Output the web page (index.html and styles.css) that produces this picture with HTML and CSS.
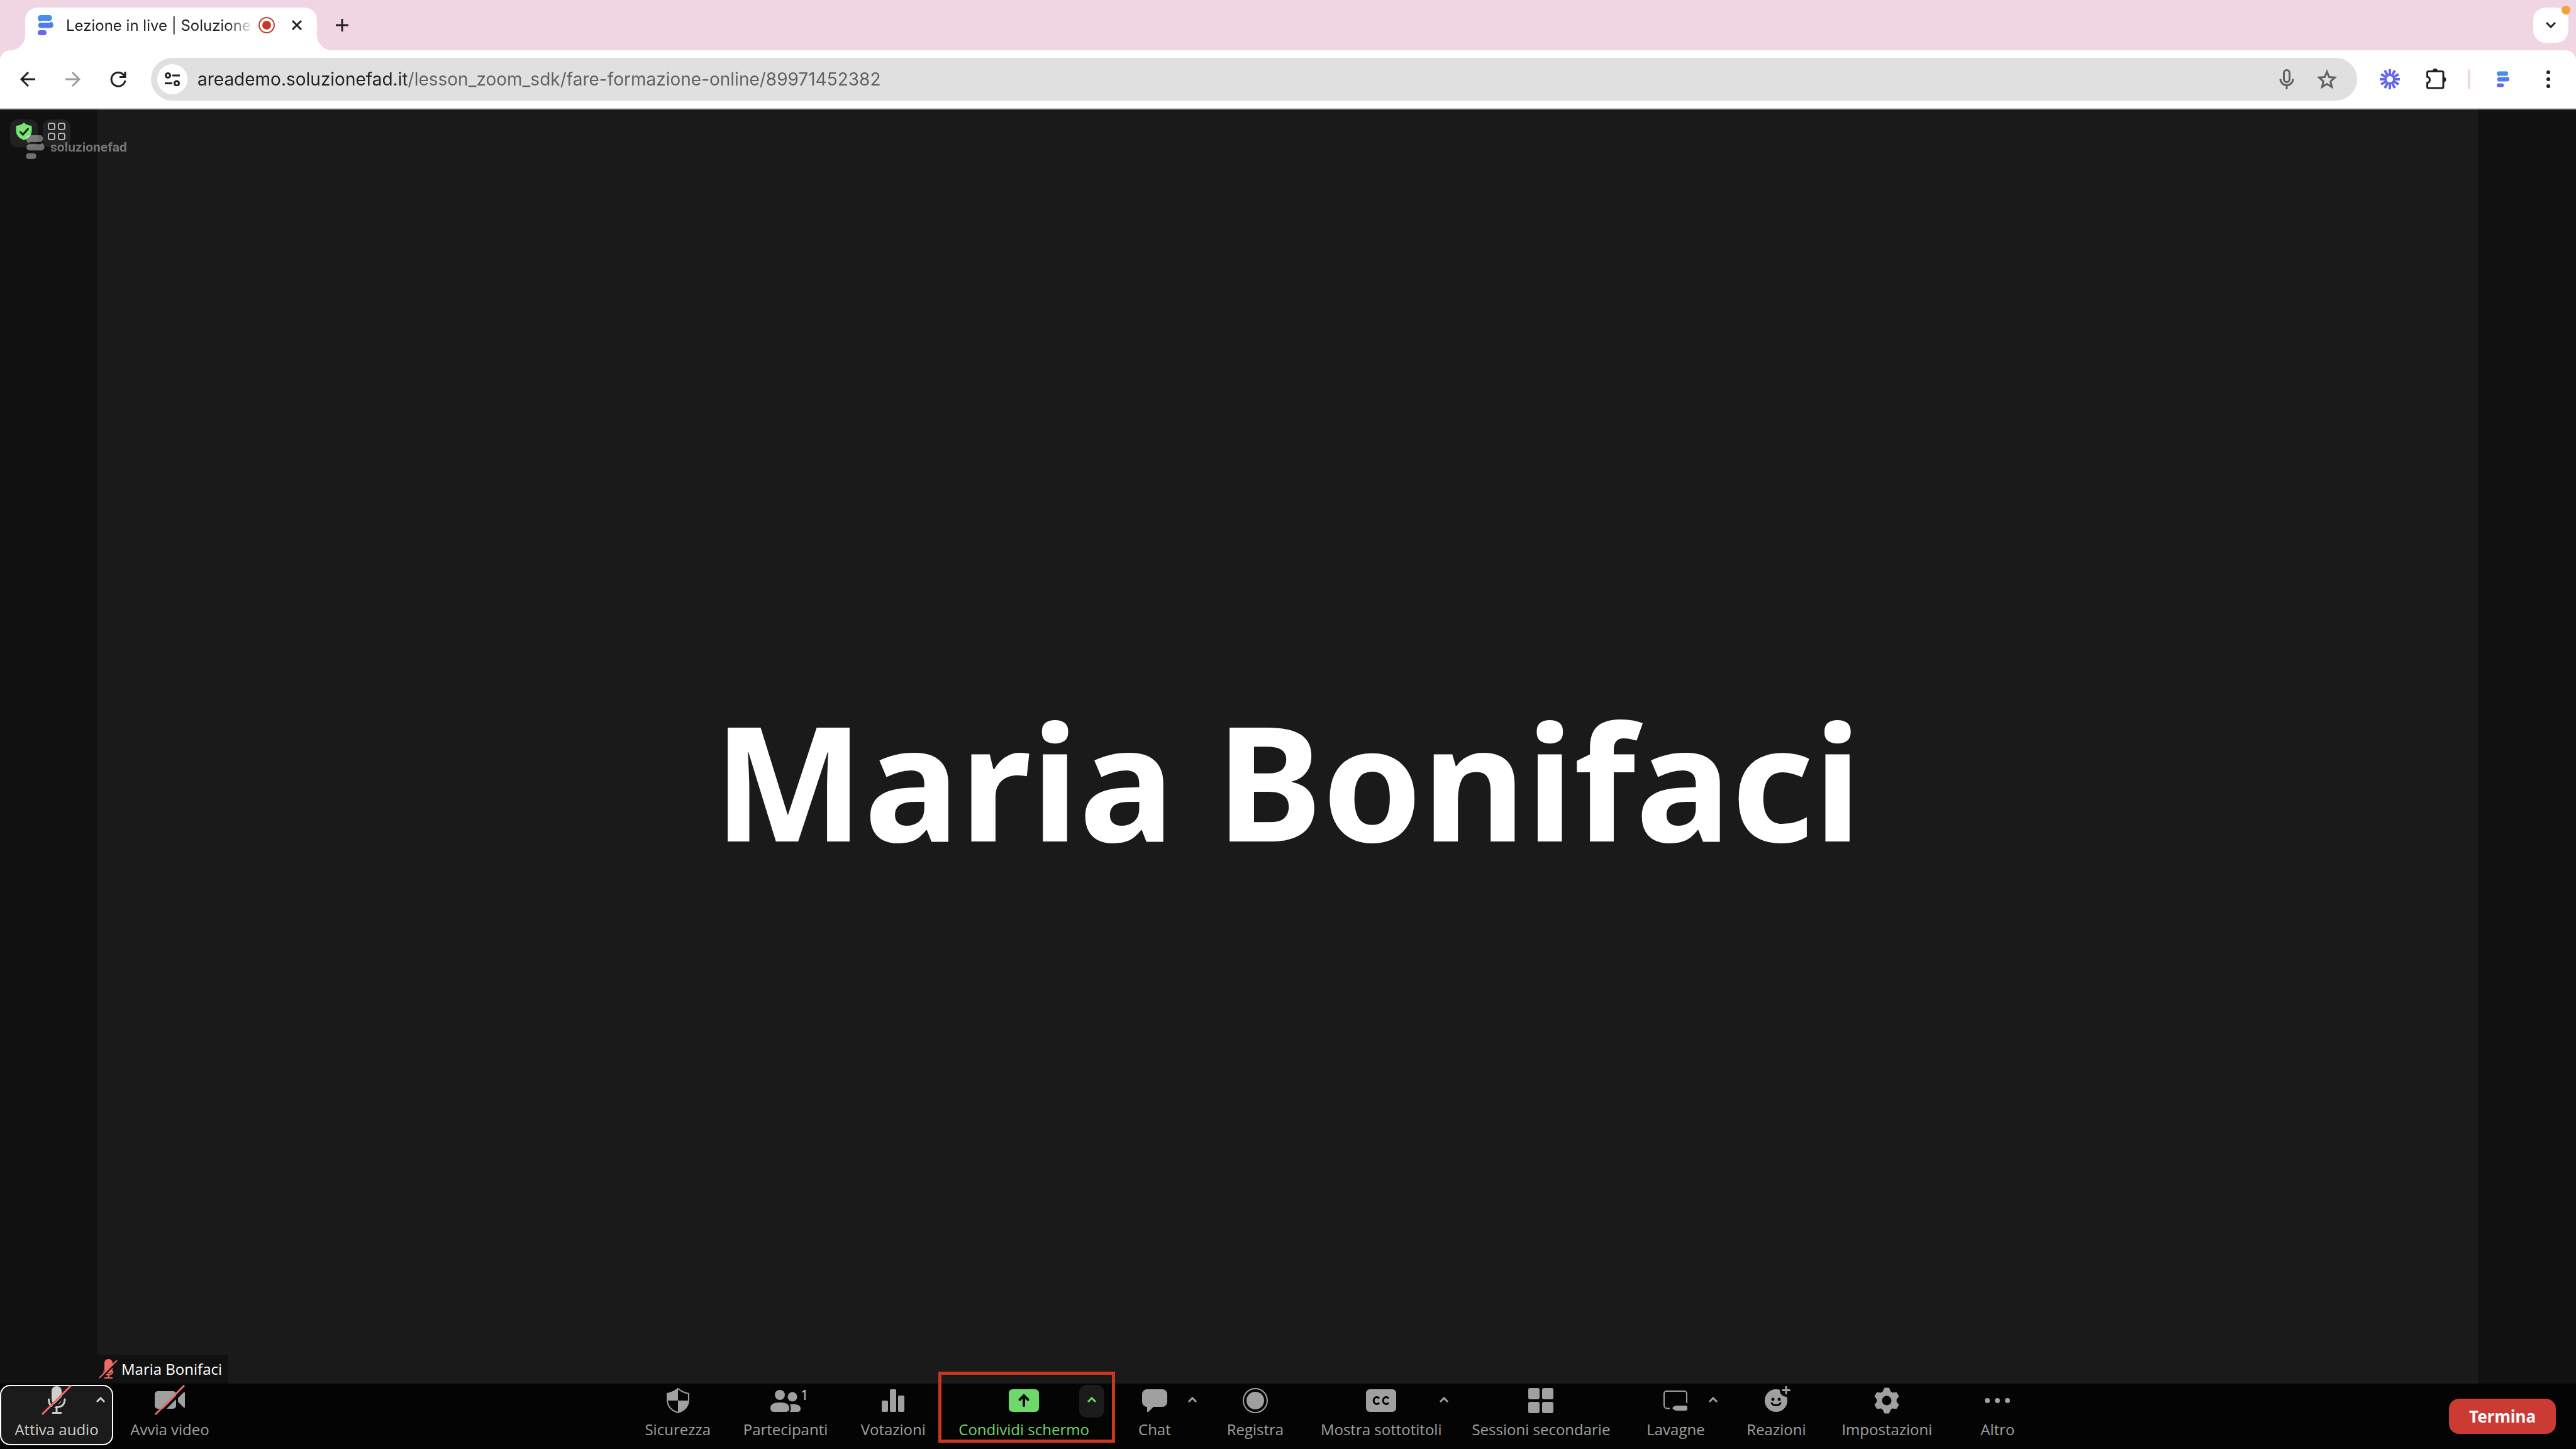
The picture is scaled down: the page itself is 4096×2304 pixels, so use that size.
FILE: index.html
```
<!DOCTYPE html>
<html lang="it">
<head>
    <meta charset="UTF-8">
    <meta name="viewport" content="width=device-width, initial-scale=1.0">
    <title>Lezione in live | Soluzionefad</title>
    <link rel="stylesheet" href="styles.css">
</head>
<body>

    <svg class="defs" width="0" height="0" aria-hidden="true">
        <linearGradient id="brand" x1="0" y1="0" x2="0" y2="32" gradientUnits="userSpaceOnUse">
            <stop offset="0" stop-color="#4396ea"/>
            <stop offset="0.5" stop-color="#4f7cee"/>
            <stop offset="1" stop-color="#6f62ee"/>
        </linearGradient>
        <symbol id="logo" viewBox="0 0 25 32">
            <path d="M5 0H20a5 5 0 0 1 0 9H6q-2 0-2 2Q0 8 0 4.500A5 4.500 0 0 1 5 0Z"/>
            <path d="M5 12H19q2 0 2-2 4 2 4 6a5 4.500 0 0 1-5 4.500H5a4 4 0 0 1 0-8.500Z"/>
            <rect y="24" width="14" height="8" rx="4"/>
        </symbol>
        <symbol id="caret" viewBox="0 0 16 10">
            <path d="M2 8 8 2l6 6" fill="none" stroke="currentColor" stroke-width="3"/>
        </symbol>
    </svg>

    <header class="tab-strip">
        <div class="tab">
            <svg class="favicon" width="25" height="32" fill="url(#brand)"><use href="#logo"/></svg>
            <span class="tab-title">Lezione in live | Soluzione</span>
            <svg width="28" height="28" viewBox="0 0 28 28" fill="#c5392b"><circle cx="14" cy="14" r="12" fill="none" stroke="#c5392b" stroke-width="2"/><circle cx="14" cy="14" r="7"/></svg>
            <button class="icon-button tab-close" aria-label="Chiudi scheda">
                <svg width="18" height="18" viewBox="0 0 18 18" fill="none" stroke="#202124" stroke-width="3"><path d="M2 2l14 14M16 2 2 16"/></svg>
            </button>
        </div>
        <button class="icon-button new-tab" aria-label="Nuova scheda">
            <svg width="20" height="20" viewBox="0 0 20 20" fill="none" stroke="#202124" stroke-width="3"><path d="M10 0v20M0 10h20"/></svg>
        </button>
        <button class="icon-button tab-search" aria-label="Cerca schede">
            <svg width="18" height="12" viewBox="0 0 18 12" fill="none" stroke="#202124" stroke-width="3"><path d="M2 2l7 7 7-7"/></svg>
            <span class="alert-dot"></span>
        </button>
    </header>

    <nav class="toolbar">
        <button class="icon-button" aria-label="Indietro">
            <svg width="24" height="24" viewBox="0 0 24 24" fill="none" stroke="#202124" stroke-width="3"><path d="M24 12H3M13 1 2 12l11 11"/></svg>
        </button>
        <button class="icon-button" aria-label="Avanti">
            <svg width="24" height="24" viewBox="0 0 24 24" fill="none" stroke="#9b9b9b" stroke-width="3"><path d="M0 12h21M11 1l11 11-11 11"/></svg>
        </button>
        <button class="icon-button" aria-label="Ricarica">
            <svg width="26" height="26" viewBox="0 0 26 26" fill="none" stroke="#202124" stroke-width="3"><path d="M24 15A11 11 0 1 1 21 5.500L24 9M24 1v8.500H15"/></svg>
        </button>
        <div class="address-bar">
            <button class="icon-button site-info" aria-label="Informazioni sul sito">
                <svg width="24" height="22" viewBox="0 0 24 22" fill="none" stroke="#202124" stroke-width="3"><circle cx="5" cy="5" r="3.500"/><path d="M12 5h12M0 17.500h12"/><circle cx="19" cy="17.500" r="3.500"/></svg>
            </button>
            <input class="url" type="text" aria-label="Indirizzo" value="areademo.soluzionefad.it/lesson_zoom_sdk/fare-formazione-online/89971452382">
            <button class="icon-button" aria-label="Microfono">
                <svg width="24" height="32" viewBox="0 0 24 32" fill="none" stroke="#5f6064" stroke-width="3"><rect x="7.500" y="1.500" width="9" height="19" rx="4.500"/><path d="M2 15.500a10 10 0 0 0 20 0M12 25.500V32"/></svg>
            </button>
            <button class="icon-button" aria-label="Preferiti">
                <svg width="32" height="32" viewBox="0 0 32 32" fill="none" stroke="#5f6064" stroke-width="3"><path d="M16 4l3.500 8.500 9 .8-6.800 6 2 9-7.700-4.800-7.700 4.800 2-9-6.800-6 9-.8z"/></svg>
            </button>
        </div>
        <button class="icon-button" aria-label="Estensione">
            <svg width="32" height="32" viewBox="-16 -16 32 32" fill="none" stroke="#6366f1" stroke-width="4"><path d="M0-16V-5M0 16V5M-16 0H-5M16 0H5M8-13.900 2.500-4.300M-8 13.900l5.500-9.600M-8-13.900l5.500 9.600M8 13.900 2.500 4.300M13.900-8 4.300-2.500M-13.900 8l9.600-5.500M-13.900-8l9.600 5.500M13.900 8 4.300 2.500"/></svg>
        </button>
        <button class="icon-button" aria-label="Estensioni">
            <svg width="36" height="36" viewBox="0 0 36 36"><path d="M5.500 7.500a2 2 0 0 1 2-2H29a2 2 0 0 1 2 2V30a2 2 0 0 1-2 2H7.500a2 2 0 0 1-2-2v-6q4-1 4-5t-4-5z" fill="none" stroke="#202124" stroke-width="3"/><path d="M14 5a4 4 0 0 1 8 0zM31 14a4.500 4.500 0 0 1 0 9z" fill="#202124"/></svg>
        </button>
        <span class="divider"></span>
        <button class="icon-button" aria-label="Profilo">
            <svg width="20" height="26" viewBox="0 0 25 32" fill="url(#brand)"><use href="#logo"/></svg>
        </button>
        <button class="icon-button" aria-label="Menu">
            <svg width="6" height="28" viewBox="0 0 6 28" fill="#202124"><circle cx="3" cy="3" r="3"/><circle cx="3" cy="14" r="3"/><circle cx="3" cy="25" r="3"/></svg>
        </button>
    </nav>

    <main class="meeting">
        <div class="video">
            <h1>Maria Bonifaci</h1>
            <div class="name-tag">
                <svg width="30" height="32" viewBox="0 0 30 32"><rect x="9" y="0" width="13" height="23" rx="6" fill="#ef6b64"/><path d="M8 19q1 6 7.500 6t7-6M15.500 25v4M9 30h13" fill="none" stroke="#ef6b64" stroke-width="2"/><path d="M3 31 30 4" stroke="#111" stroke-width="3"/><path d="M1 30 29 2" stroke="#ef6b64" stroke-width="2"/></svg>
                <span>Maria Bonifaci</span>
            </div>
        </div>

        <div class="corner-buttons">
            <button class="icon-button" aria-label="Informazioni riunione">
                <svg width="26" height="28" viewBox="0 0 26 28"><path d="M13 0q5 4.500 12.500 5v8q0 10-12.500 15Q.5 23 .5 13V5Q8 4.500 13 0Z" fill="#75e670"/><path d="M7.500 15l4 4 8-9" fill="none" stroke="#1b1b1b" stroke-width="3" stroke-linecap="round"/></svg>
            </button>
            <button class="icon-button" aria-label="Vista">
                <svg width="28" height="28" viewBox="0 0 28 28" fill="none" stroke="#b5b5b5" stroke-width="2"><rect x="1" y="1" width="10" height="10" rx="3"/><rect x="17" y="1" width="10" height="10" rx="3"/><rect x="1" y="17" width="10" height="10" rx="3"/><rect x="17" y="17" width="10" height="10" rx="3"/></svg>
            </button>
        </div>
        <div class="watermark">
            <svg width="30" height="38" viewBox="0 0 25 32" fill="#fff"><use href="#logo"/></svg>
            <span>soluzionefad</span>
        </div>

        <footer class="controls">
            <div class="group">
                <div class="control active">
                    <button class="action">
                        <svg width="48" height="48" viewBox="0 0 48 48"><rect x="16" y="1" width="16" height="29" rx="8" fill="#cfcfcf"/><path d="M11.500 22q0 12.500 12.500 12.500T37 22M24 35v8M18 43.500h13" fill="none" stroke="#cfcfcf" stroke-width="3" stroke-linecap="round"/><path d="M4 49 50 3" stroke="#1b1b1b" stroke-width="4"/><path d="M1 46 47 0" stroke="#ef6b64" stroke-width="3"/></svg>
                        <span>Attiva audio</span>
                    </button>
                    <button class="caret" aria-label="Opzioni audio"><svg width="16" height="10"><use href="#caret"/></svg></button>
                </div>
                <div class="control">
                    <button class="action">
                        <svg width="48" height="48" viewBox="0 0 48 48"><rect x="0" y="9" width="34" height="28" rx="5"/><path d="M37 20 46 11q2-1 2 1v22q0 2-2 1l-9-9z"/><path d="M4 49 50 3" stroke="#040404" stroke-width="4"/><path d="M1 46 47 0" stroke="#ef6b64" stroke-width="3"/></svg>
                        <span>Avvia video</span>
                    </button>
                </div>
            </div>

            <div class="group center">
                <div class="control">
                    <button class="action">
                        <svg width="48" height="48" viewBox="0 0 48 48"><path d="M24 5q7 6 17 8v9q0 16-17 21Q7 38 7 22v-9Q17 11 24 5Z" fill="none" stroke="currentColor" stroke-width="2"/><path d="M24 5v19H7V13Q17 11 24 5ZM24 24h17q-1 14-17 19z"/></svg>
                        <span>Sicurezza</span>
                    </button>
                </div>
                <div class="control">
                    <button class="action">
                        <svg width="48" height="48" viewBox="0 0 48 48"><circle cx="15" cy="15" r="8"/><circle cx="35" cy="18" r="7.500"/><path d="M6 42q-6 0-6-6 0-9 15-9t15 9q0 6-6 6zM31 42q3-6 0-12 17-2 17 7 0 5-5 5z"/></svg>
                        <span>Partecipanti</span>
                    </button>
                    <span class="count">1</span>
                </div>
                <div class="control">
                    <button class="action">
                        <svg width="48" height="48" viewBox="0 0 48 48"><rect x="6" y="24" width="10" height="18" rx="2"/><rect x="19" y="6" width="10" height="36" rx="2"/><rect x="32" y="16" width="10" height="26" rx="2"/></svg>
                        <span>Votazioni</span>
                    </button>
                </div>
                <div class="control share">
                    <button class="action">
                        <svg width="48" height="48" viewBox="0 0 48 48"><rect y="6" width="48" height="36" rx="6"/><path d="M24 32V17M17.500 22.500 24 16l6.500 6.500" fill="none" stroke="#040404" stroke-width="4" stroke-linecap="round"/></svg>
                        <span>Condividi schermo</span>
                    </button>
                    <button class="caret" aria-label="Opzioni condivisione"><svg width="16" height="10"><use href="#caret"/></svg></button>
                    <div class="highlight"></div>
                </div>
                <div class="control">
                    <button class="action">
                        <svg width="48" height="48" viewBox="0 0 48 48"><path d="M12 6h24a8 8 0 0 1 8 8v12a8 8 0 0 1-8 8H22l-8 8h-2v-8a8 8 0 0 1-8-8V14a8 8 0 0 1 8-8z"/></svg>
                        <span>Chat</span>
                    </button>
                    <button class="caret" aria-label="Opzioni chat"><svg width="16" height="10"><use href="#caret"/></svg></button>
                </div>
                <div class="control">
                    <button class="action">
                        <svg width="48" height="48" viewBox="0 0 48 48"><circle cx="24" cy="24" r="19" fill="none" stroke="currentColor" stroke-width="2"/><circle cx="24" cy="24" r="14"/></svg>
                        <span>Registra</span>
                    </button>
                </div>
                <div class="control">
                    <button class="action">
                        <svg width="48" height="48" viewBox="0 0 48 48"><rect y="6" width="48" height="36" rx="6"/><path d="M21 20.500a5 5.500 0 1 0 0 7M36 20.500a5 5.500 0 1 0 0 7" fill="none" stroke="#040404" stroke-width="3"/></svg>
                        <span>Mostra sottotitoli</span>
                    </button>
                    <button class="caret" aria-label="Opzioni sottotitoli"><svg width="16" height="10"><use href="#caret"/></svg></button>
                </div>
                <div class="control">
                    <button class="action">
                        <svg width="48" height="48" viewBox="0 0 48 48"><rect x="4" y="4" width="18" height="18" rx="3"/><rect x="26" y="4" width="18" height="18" rx="3"/><rect x="4" y="26" width="18" height="18" rx="3"/><rect x="26" y="26" width="18" height="18" rx="3"/></svg>
                        <span>Sessioni secondarie</span>
                    </button>
                </div>
                <div class="control">
                    <button class="action">
                        <svg width="48" height="48" viewBox="0 0 48 48"><path d="M15 36.500h-4a5 5 0 0 1-5-5V13a4 4 0 0 1 4-4h28a4 4 0 0 1 4 4v15" fill="none" stroke="currentColor" stroke-width="2"/><path d="M19 36q3-4 7-4h14q3 0 3 3v2q0 3-3 3H26q-4 0-7-4z"/></svg>
                        <span>Lavagne</span>
                    </button>
                    <button class="caret" aria-label="Opzioni lavagne"><svg width="16" height="10"><use href="#caret"/></svg></button>
                </div>
                <div class="control">
                    <button class="action">
                        <svg width="48" height="48" viewBox="0 0 48 48"><circle cx="24" cy="24" r="18"/><circle cx="40" cy="8" r="10" fill="#040404"/><path d="M40 1v13M33.500 7.500h13" fill="none" stroke="currentColor" stroke-width="3"/><g fill="#040404"><circle cx="19" cy="22" r="2.500"/><circle cx="29" cy="22" r="2.500"/></g><path d="M17 28q2 3.500 7 3.500t7-3.500" fill="none" stroke="#040404" stroke-width="3" stroke-linecap="round"/></svg>
                        <span>Reazioni</span>
                    </button>
                </div>
                <div class="control">
                    <button class="action">
                        <svg width="48" height="48" viewBox="0 0 48 48"><path d="M20.500 4h7l2.500 6 3.500 2 6-.8 3.500 6-3.800 5v3.600l3.800 5-3.500 6-6-.8-3.500 2-2.500 6h-7L18 38l-3.500-2-6 .8-3.500-6 3.800-5v-3.600l-3.800-5 3.500-6 6 .8L18 10z" stroke="currentColor" stroke-linejoin="round"/><circle cx="24" cy="24" r="7.500" fill="#040404"/></svg>
                        <span>Impostazioni</span>
                    </button>
                </div>
                <div class="control">
                    <button class="action">
                        <svg width="48" height="48" viewBox="0 0 48 48"><circle cx="8" cy="24" r="4"/><circle cx="24" cy="24" r="4"/><circle cx="40" cy="24" r="4"/></svg>
                        <span>Altro</span>
                    </button>
                </div>
            </div>

            <button class="end-button">Termina</button>
        </footer>
    </main>

</body>
</html>
```

FILE: styles.css
```
* {
    box-sizing: border-box;
}

body {
    font-family: 'Open Sans', 'Noto Sans', sans-serif;
    margin: 0;
    height: 100vh;
    display: flex;
    flex-direction: column;
    background-color: #efd6e2;
}

button {
    border: none;
    padding: 0;
    background: none;
    color: inherit;
    font-family: inherit;
    cursor: pointer;
}

svg {
    display: block;
    flex: none;
}

.defs {
    position: absolute;
}

.icon-button {
    display: flex;
    align-items: center;
    justify-content: center;
    flex: none;
    width: 48px;
    height: 48px;
}

/* browser tabs */
.tab-strip {
    display: flex;
    align-items: center;
    height: 80px;
    padding: 12px 12px 0 40px;
}

.tab {
    position: relative;
    display: flex;
    align-items: center;
    width: 464px;
    height: 68px;
    padding: 0 8px 12px 20px;
    background-color: white;
    border-radius: 20px 20px 0 0;
}

.tab::before,
.tab::after {
    content: "";
    position: absolute;
    bottom: 0;
    width: 24px;
    height: 24px;
}

.tab::before {
    left: -24px;
    background: radial-gradient(circle at 0 0, transparent 24px, white 24px);
}

.tab::after {
    right: -24px;
    background: radial-gradient(circle at 100% 0, transparent 24px, white 24px);
}

.tab-title {
    flex: 1;
    margin: 0 6px 0 20px;
    white-space: nowrap;
    font-family: Inter, sans-serif;
    font-size: 24px;
    color: #202124;
    -webkit-mask-image: linear-gradient(to right, black 86%, transparent);
    mask-image: linear-gradient(to right, black 86%, transparent);
}

.tab-close {
    margin-left: 10px;
}

.new-tab {
    margin: 0 0 12px 16px;
}

.tab-search {
    position: relative;
    width: 56px;
    height: 56px;
    margin: 0 0 12px auto;
    background-color: white;
    border-radius: 20px;
}

.alert-dot {
    position: absolute;
    top: -3px;
    right: -3px;
    width: 14px;
    height: 14px;
    border-radius: 50%;
    background-color: #f0a33c;
}

.toolbar {
    display: flex;
    align-items: center;
    height: 94px;
    padding: 0 20px;
    gap: 24px;
    background-color: white;
    border-bottom: 2px solid #c8cbc8;
    border-radius: 16px 16px 0 0;
}

.address-bar {
    flex: 1;
    display: flex;
    align-items: center;
    height: 68px;
    margin: 0 4px;
    padding: 0 24px 0 10px;
    gap: 16px;
    border-radius: 34px;
    background-color: #e0e0e0;
}

.site-info {
    background-color: white;
    border-radius: 50%;
}

/* the host is darker than the rest of the address */
.url {
    flex: 1;
    min-width: 0;
    border: none;
    outline: none;
    padding: 0;
    font-family: Inter, sans-serif;
    font-size: 28px;
    line-height: 40px;
    color: transparent;
    background: linear-gradient(to right, #202124 332px, #5f6064 332px);
    -webkit-background-clip: text;
    background-clip: text;
}

.divider {
    width: 4px;
    height: 32px;
    margin: 0 4px;
    border-radius: 2px;
    background-color: #efd6e2;
}

/* meeting */
.meeting {
    position: relative;
    flex: 1;
    min-height: 0;
    padding: 0 156px 0 154px;
    background-color: #111;
    color: white;
}

.video {
    position: relative;
    display: flex;
    align-items: center;
    justify-content: center;
    height: 100%;
    background-color: #1a1a1a;
}

.video h1 {
    margin: 0;
    font-family: 'Noto Sans', sans-serif;
    font-size: 254px;
    line-height: 350px;
    font-weight: bold;
}

.name-tag {
    position: absolute;
    left: 0;
    bottom: 104px;
    display: flex;
    align-items: center;
    height: 46px;
    padding: 0 10px 0 3px;
    gap: 6px;
    background-color: #111;
    font-size: 24px;
    line-height: 32px;
}

.corner-buttons {
    position: absolute;
    top: 16px;
    left: 16px;
    display: flex;
    gap: 8px;
}

.corner-buttons .icon-button {
    width: 44px;
    height: 44px;
    padding-bottom: 6px;
    border-radius: 12px;
    background-color: #222;
}

.watermark {
    position: absolute;
    top: 41px;
    left: 41px;
    display: flex;
    align-items: center;
    gap: 9px;
    font-family: Roboto, sans-serif;
    font-size: 21px;
    line-height: 24px;
    font-weight: bold;
    opacity: 0.4;
}

.controls {
    position: absolute;
    left: 0;
    right: 0;
    bottom: 0;
    display: flex;
    height: 104px;
    padding: 2px 32px 6px 0;
    background-color: #040404;
    color: #a0a0a0;
}

.group {
    display: flex;
}

.center {
    flex: 1;
    justify-content: center;
}

.control {
    position: relative;
    min-width: 160px;
}

.group:first-child .control {
    width: 180px;
}

.active {
    background-color: #1b1b1b;
    color: #cfcfcf;
    border-radius: 16px;
    box-shadow: inset 0 0 0 2px white;
}

.action {
    display: flex;
    flex-direction: column;
    align-items: center;
    width: 100%;
    height: 100%;
    padding: 1px 24px 0;
    gap: 6px;
    font-size: 24px;
    line-height: 32px;
    white-space: nowrap;
}

.action svg {
    fill: currentColor;
    overflow: visible;
}

.caret {
    position: absolute;
    top: 0;
    right: 0;
    display: flex;
    align-items: center;
    justify-content: center;
    width: 40px;
    height: 52px;
    padding-bottom: 4px;
    border-radius: 12px;
}

.share {
    color: #6fd86b;
}

.share .caret {
    background-color: #1b1b1b;
}

.highlight {
    position: absolute;
    top: -21px;
    left: -8px;
    right: -17px;
    bottom: 4px;
    border: 5px solid #c9371f;
    pointer-events: none;
}

.count {
    position: absolute;
    top: 2px;
    left: 50%;
    margin-left: 24px;
    font-size: 22px;
    line-height: 26px;
    color: #cfcfcf;
}

.end-button {
    align-self: center;
    height: 56px;
    margin-top: 4px;
    padding: 0 32px;
    border-radius: 16px;
    background-color: #cb3b34;
    color: white;
    font-family: 'Noto Sans', sans-serif;
    font-size: 26px;
    font-weight: bold;
}
```
